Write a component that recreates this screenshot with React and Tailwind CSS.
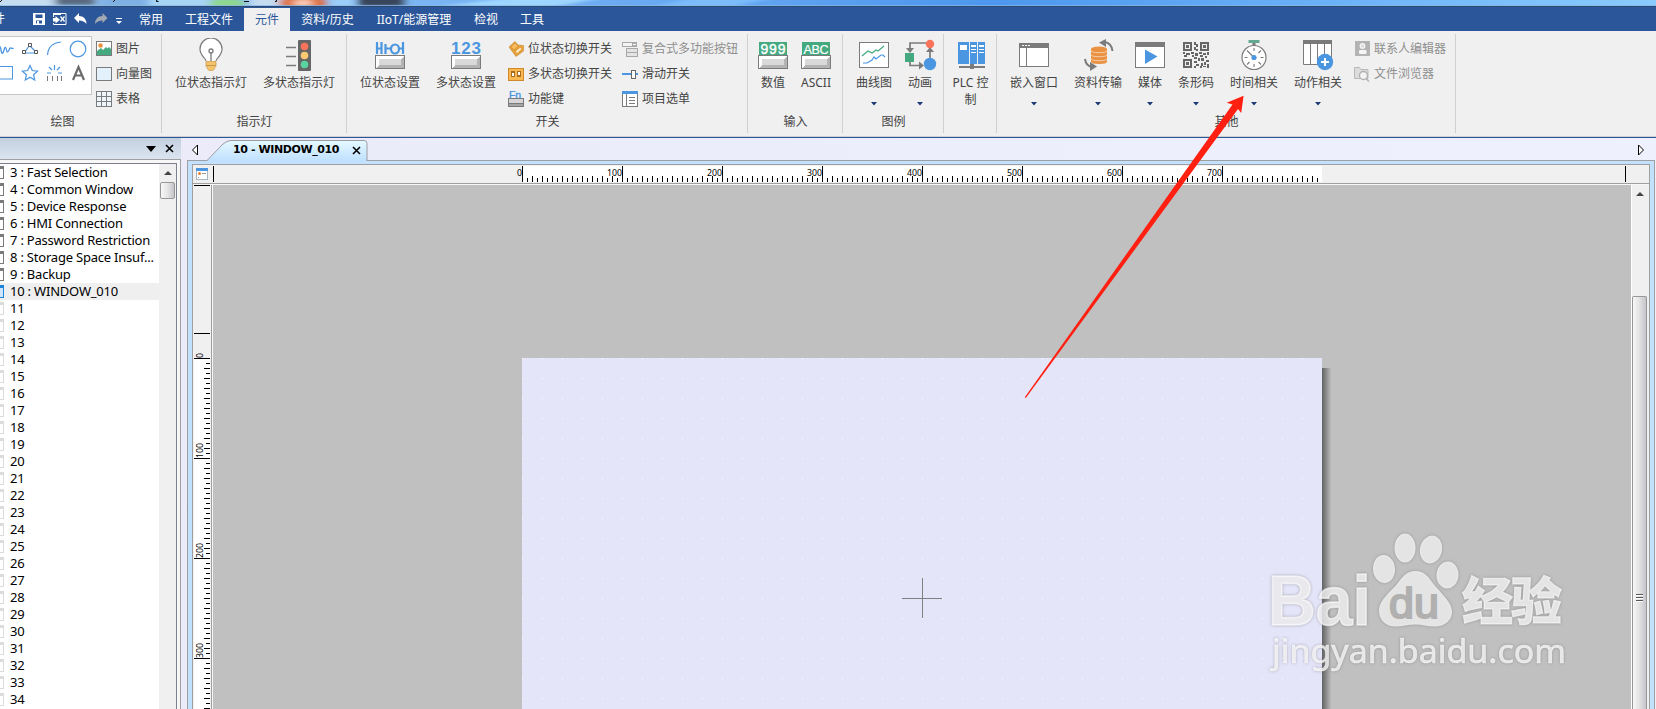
import React from "react";

const GREY = "#7b7b7b";
const BLUE = "#4a96e0";
const GREEN = "#44a97f";

/* ---------- small helpers ---------- */
function Svg({ w, h, children, className = "" }) {
  return (
    <svg width={w} height={h} viewBox={`0 0 ${w} ${h}`} fill="none" className={`block shrink-0 ${className}`}>
      {children}
    </svg>
  );
}

function KeyCap({ y = 17 }) {
  return (
    <g shapeRendering="crispEdges">
      <rect x="2.5" y={y + 0.5} width="29" height="13" fill="#d9d9d9" stroke={GREY} />
      <path d={`M3 ${y + 1}H31L28 ${y + 4}H6V${y + 10}L3 ${y + 13}Z`} fill="#fff" />
      <path d={`M31 ${y + 1}V${y + 13}H3L6 ${y + 10}H28V${y + 4}Z`} fill="#b4b4b4" />
    </g>
  );
}

/* ---------- large ribbon icons, 34 x 34 ---------- */
const big = {
  bulb: (
    <>
      <path d="M12 23c0-3-6-5-6-12a11 11 0 0 1 22 0c0 7-6 9-6 12" fill="#fff" stroke={GREY} strokeWidth="1.2" />
      <circle cx="17" cy="13" r="2" stroke={GREY} strokeWidth="1.3" />
      <path d="M17 15V23" stroke={GREY} strokeWidth="1.3" />
      <path d="M12 23.5h10v4q0 1-1 2l-1 2q-.5 1-1.500 1h-3q-1 0-1.500-1l-1-2q-1-1-1-2z" fill="#f2c36b" stroke="#c9964a" strokeWidth=".7" />
      <path d="M12 27.500h10" stroke="#c9964a" />
    </>
  ),
  traffic: (
    <>
      <rect x="16" y="2" width="13" height="31" rx="1" fill="#666" />
      <circle cx="22.500" cy="8.500" r="3.800" fill="#fb735a" />
      <circle cx="22.500" cy="17.500" r="3.800" fill="#fdc972" />
      <circle cx="22.500" cy="26.500" r="3.800" fill="#5bd3a0" />
      <path d="M4 9.500h10M4 18.500h10M4 27.500h10" stroke={GREY} strokeWidth="1.400" />
    </>
  ),
  bitSet: (
    <>
      <path d="M4 4v12M8.500 4v12M4 10.500h4M12.500 6v10M12 10.500h6M30 4v12M26 10.500h3" stroke={BLUE} strokeWidth="2.200" />
      <ellipse cx="22" cy="11" rx="4" ry="4.500" stroke={BLUE} strokeWidth="2.200" />
      <KeyCap />
    </>
  ),
  wordSet: (
    <>
      <text x="2" y="16" fill={BLUE} fontSize="17" fontWeight="700" fontFamily="Liberation Sans" textLength="30">123</text>
      <KeyCap />
    </>
  ),
  numeric: (
    <>
      <rect x="3" y="4" width="28" height="14" fill={GREEN} />
      <text x="4.500" y="16" fill="#fff" stroke="#fff" strokeWidth=".4" fontSize="14" fontFamily="Liberation Sans" textLength="25">999</text>
      <KeyCap y={17} />
    </>
  ),
  ascii: (
    <>
      <rect x="3" y="4" width="28" height="14" fill={GREEN} />
      <text x="4.500" y="15.500" fill="#fff" stroke="#fff" strokeWidth=".2" fontSize="12.500" fontFamily="Liberation Sans" textLength="25">ABC</text>
      <KeyCap y={17} />
    </>
  ),
  trend: (
    <>
      <rect x="2.500" y="4.500" width="29" height="25" fill="#fff" stroke={GREY} />
      <path d="M5 18l6-5 4 2 4-3 2 1 6-5" stroke={GREEN} strokeWidth="1.200" />
      <path d="M6 25h4l5-3 2-3 2 2 5-4h2l2 2" stroke={BLUE} strokeWidth="1.200" />
    </>
  ),
  anim: (
    <>
      <path d="M23 5H7v7M7 24v3.500h10M27 20v-8" stroke={GREY} strokeWidth="1.700" />
      <path d="M3 10h8l-4 5zM16 23.500l5 4-5 4zM23 14h8l-4-5z" fill={GREY} />
      <rect x="2" y="15" width="9" height="9" fill={GREEN} />
      <circle cx="27" cy="6" r="4.200" fill="#fb735a" />
      <circle cx="27" cy="26" r="6.200" fill={BLUE} />
    </>
  ),
  plc: (
    <g shapeRendering="crispEdges">
      <path d="M4 4h11v22H4zM16 4h7v22h-7zM24 4h7v22h-7z" fill={BLUE} />
      <path d="M6 7h7v5H6zM17 7h5v2h-5zM17 11h5v1h-5zM17 14h5v1h-5zM25 7h5v2h-5zM25 11h5v1h-5zM25 14h5v1h-5z" fill="#fff" />
      <path d="M5 28h26v2H5zM16 26h4v5h-4z" fill={GREY} />
    </g>
  ),
  embed: (
    <g shapeRendering="crispEdges">
      <rect x="2.500" y="5.500" width="29" height="23" fill="#fff" stroke={GREY} />
      <path d="M2 5h30v5H2zM9 10h1v19H9z" fill={GREY} />
      <path d="M5 7h2v1H5zM8 7h2v1H8zM11 7h2v1h-2z" fill="#fff" />
    </g>
  ),
  transfer: (
    <>
      <path d="M10 11v12.500q0 2.500 8 2.500t8-2.500V11z" fill="#ea9142" />
      <ellipse cx="18" cy="11" rx="8" ry="2.400" fill="#ea9142" />
      <path d="M10 12.500q0 2.200 8 2.200t8-2.200M10 16.500q0 2.200 8 2.200t8-2.200M10 20.500q0 2.200 8 2.200t8-2.200" stroke="#f8dcc0" strokeWidth=".8" />
      <path d="M31.500 13q-1-8-8-9" stroke={GREY} strokeWidth="2" />
      <path d="M25 1v8l-7-4.500z" fill={GREY} />
      <path d="M4 21q1 7 7 8" stroke={GREY} strokeWidth="2" />
      <path d="M9 24v9l7-4.500z" fill={GREY} />
    </>
  ),
  media: (
    <>
      <rect x="2.500" y="4.500" width="29" height="25" fill="#fff" stroke={GREY} />
      <path d="M2 4h30v5H2z" fill={GREY} />
      <path d="M12 11.500l12.500 7L12 26z" fill={BLUE} />
    </>
  ),
  qr: (
    <g shapeRendering="crispEdges" fill="#666">
      <path fillRule="evenodd" d="M4 4h9v9H4zM6 6v5h5V6zM21 4h9v9h-9zM23 6v5h5V6zM4 21h9v9H4zM6 23v5h5v-5z" />
      <path d="M7 7h3v3H7zM24 7h3v3h-3zM7 24h3v3H7zM15 4h2v3h-2zM17 6h2v3h-2zM15 9h2v3h-2zM17 11h2v2h-2zM4 14h2v2H4zM7 15h4v2H7zM5 17h3v2H5zM12 14h3v2h-3zM13 17h2v2h-2zM16 15h3v3h-3zM20 14h3v2h-3zM24 15h3v2h-3zM28 14h2v3h-2zM21 17h3v2h-3zM26 18h2v2h-2zM15 19h3v2h-3zM19 20h2v3h-2zM15 23h3v2h-3zM17 26h3v2h-3zM15 28h2v2h-2zM22 20h3v3h-3zM27 22h3v2h-3zM22 25h2v3h-2zM25 24h2v3h-2zM28 26h2v4h-2zM21 28h2v2h-2zM24 28h3v1h-3z" />
    </g>
  ),
  timer: (
    <>
      <path d="M15.500 5h3v3h-3z" fill={GREY} />
      <rect x="11.500" y="2" width="11" height="3" fill="#63a893" />
      <circle cx="17" cy="19.500" r="12" fill="#fff" stroke={GREY} strokeWidth="1.200" />
      <path d="M17 10v3M17 26v3M7.500 19.500h3M23.500 19.500h3M10 12.500l7 7M24 12.500l-2.500 2.500M10 26.500l2.500-2.500M24 26.500l-2.500-2.500" stroke={GREY} strokeWidth="1.100" />
      <circle cx="17" cy="19.500" r="2.600" fill={BLUE} />
    </>
  ),
  action: (
    <>
      <path d="M2.500 3v23.500h28V3" fill="#fff" stroke={GREY} />
      <path d="M9.500 4v22M16.500 4v22M23.500 4v22" stroke={GREY} />
      <path d="M2 2h29v4H2z" fill={GREY} />
      <circle cx="24" cy="24" r="8.200" fill={BLUE} />
      <path d="M24 20v8M20 24h8" stroke="#fff" strokeWidth="2" />
    </>
  ),
};

/* ---------- small ribbon icons, 16 x 16 ---------- */
const small = {
  picture: (
    <>
      <rect x=".5" y=".5" width="15" height="14" fill="#fff" stroke={GREY} />
      <path d="M1 14V10l4-3 2 2 3-3 1.500 1.500L13 6l2 2v6z" fill={GREEN} />
      <circle cx="4.500" cy="4.500" r="2.300" fill="#ea9142" />
    </>
  ),
  vector: <rect x=".5" y="1.500" width="15" height="13" fill="#e3f1fd" stroke={GREY} />,
  table: (
    <g shapeRendering="crispEdges">
      <rect x=".5" y=".5" width="15" height="15" fill="#eef5fb" stroke={GREY} />
      <path d="M1 5.500h14M1 10.500h14M5.500 1v14M10.500 1v14" stroke={GREY} />
    </g>
  ),
  toggleBit: (
    <>
      <path d="M1 6l6-5.500 3 3.500 5.500 0.500V10L8 15.500z" fill="#e5a13c" stroke="#c98a2e" strokeWidth=".6" />
      <path d="M3 5.500L7 2l3 3-4 4z" fill="#f7bd5d" stroke="#c98a2e" strokeWidth=".6" />
      <path d="M8 10.500l4-3.500 1.500 1-4.500 4z" fill="#fff4dd" />
    </>
  ),
  toggleMulti: (
    <g shapeRendering="crispEdges">
      <rect x=".5" y="2.500" width="15" height="12" fill="#fbb84e" stroke="#d08a2c" />
      <path d="M3 5h4v6H3zM9 5h4v6H9z" fill="#a86d20" />
      <path d="M4 7h2v3H4zM10 6h2v3h-2z" fill="#fff" />
    </g>
  ),
  fn: (
    <>
      <text x="1" y="7.500" fontSize="10.500" fill={BLUE} stroke={BLUE} strokeWidth=".4" fontFamily="Liberation Sans" textLength="12">Fn</text>
      <rect x=".5" y="7.500" width="15" height="8" fill="#d6d6d6" stroke={GREY} />
      <path d="M1 13h14v2H1z" fill="#a5a5a5" />
      <path d="M1 12.500h14" stroke={GREY} />
    </>
  ),
  combo: (
    <g shapeRendering="crispEdges">
      <rect x=".5" y="1.500" width="14" height="4" fill="#f4f4f4" stroke="#a8a8a8" />
      <rect x="10" y="1" width="5" height="5" fill="#a8a8a8" />
      <path d="M11 3h3v1h-3z" fill="#fff" />
      <rect x="4.500" y="7.500" width="11" height="4" fill="#e4e4e4" stroke="#a8a8a8" />
      <rect x="4.500" y="11.500" width="11" height="4" fill="#e4e4e4" stroke="#a8a8a8" />
    </g>
  ),
  slider: (
    <g shapeRendering="crispEdges">
      <path d="M0 7h9v2H0zM14 7h2v2h-2z" fill={BLUE} />
      <rect x="9.500" y="4.500" width="4" height="8" fill="#fff" stroke="#666" />
    </g>
  ),
  menu: (
    <g shapeRendering="crispEdges">
      <rect x=".5" y=".5" width="15" height="15" fill="#fff" stroke={GREY} />
      <path d="M0 0h16v3H0z" fill={BLUE} />
      <path d="M4 3h1v12H4zM7 6h6v1H7zM7 9h6v1H7zM7 12h6v1H7z" fill={GREY} />
    </g>
  ),
  contact: (
    <>
      <rect x="1" y="0" width="15" height="15" fill="#b3b3b3" />
      <circle cx="8.500" cy="5" r="2.300" stroke="#f5f5f5" strokeWidth="1.200" fill="#ddd" />
      <rect x="5" y="9" width="7.500" height="4" rx="1" fill="#f5f5f5" />
    </>
  ),
  browse: (
    <>
      <path d="M.5 1.500h5l1.500 2h7v9H.5z" fill="#dcdcdc" stroke="#b9b9b9" />
      <circle cx="9.500" cy="9.500" r="4" fill="#f3f3f3" stroke="#b0b0b0" strokeWidth="1.300" />
      <path d="M12 12.500l3 3" stroke="#b0b0b0" strokeWidth="1.500" />
    </>
  ),
};

function BigButton({ icon, label, width, caret = false }) {
  return (
    <div className={`flex shrink-0 flex-col items-center pt-[7px] ${width}`}>
      <Svg w={34} h={34}>{big[icon]}</Svg>
      <div className="mt-[2px] text-center leading-[17px]">{label}</div>
      {caret && (
        <Svg w={6} h={4} className="mt-[11px]"><path d="M0 0h6L3 3.500z" fill="#1f3a78" /></Svg>
      )}
    </div>
  );
}

function SmallButton({ icon, label, disabled = false }) {
  return (
    <div className={`flex h-[25px] items-center gap-1 ${disabled ? "text-[#8f8f8f]" : ""}`}>
      <Svg w={16} h={16}>{small[icon]}</Svg>
      <span className="leading-4">{label}</span>
    </div>
  );
}

function Group({ label, width, pad, children, labelClass = "" }) {
  return (
    <section className={`relative flex shrink-0 flex-col ${width}`}>
      <div className={`flex h-[83px] ${pad}`}>{children}</div>
      <div className={`text-center leading-4 ${labelClass}`}>{label}</div>
      <div className="absolute right-0 top-[3px] h-[99px] w-px bg-[#d0d0d0]" />
    </section>
  );
}

function Gallery() {
  return (
    <div className="mt-[5px] h-[59px] w-[92px] border-y border-r border-[#c6c6c6] bg-white">
      <Svg w={90} h={57}>
        <path d="M-3 16c2-8 3-8 4-3s2 4 3 0 2-3 2.500 0 2 2 3-1 2 1 4-1" stroke={BLUE} strokeWidth="1.300" />
        <path d="M25 15L29 9M30 9l6 6M26 16h8" stroke={BLUE} strokeWidth="1.200" />
        <path d="M22.500 13.500h3v3h-3zM28.500 6.500h3v3h-3zM34.500 13.500h3v3h-3z" stroke="#555" fill="#fff" />
        <path d="M47.500 18q1-12 13.500-13" stroke={BLUE} strokeWidth="1.200" />
        <circle cx="78" cy="12" r="7.800" stroke={BLUE} strokeWidth="1.200" />
        <rect x="-6" y="29.500" width="18.500" height="12.500" stroke={BLUE} />
        <path d="M30 28.500l2.300 5 5.300.6-4 3.600 1.100 5.300-4.700-2.700-4.700 2.700 1.100-5.300-4-3.600 5.300-.6z" stroke={BLUE} strokeWidth="1.200" />
        <path d="M54.500 28v5M47 36h4M58 36h4M49 30l3 3M60 30l-3 3" stroke={BLUE} strokeWidth="1.200" />
        <path d="M47.500 39v5M52.500 39v5M57.500 39v5M61.500 39v5" stroke="#777" />
        <path d="M73 43L78.500 30L84 43M75 38.500h7" stroke="#6b6b6b" strokeWidth="2.200" />
      </Svg>
    </div>
  );
}

function Ribbon() {
  return (
    <div className="flex h-[106px] border-b border-[#d0d0d0] bg-[#f0f0f0] text-[#444]">
      <Group label="绘图" width="w-[162px]" labelClass="pr-[37px]">
        <Gallery />
        <div className="ml-1 flex flex-col pt-[5px]">
          <SmallButton icon="picture" label="图片" />
          <SmallButton icon="vector" label="向量图" />
          <SmallButton icon="table" label="表格" />
        </div>
      </Group>
      <Group label="指示灯" width="w-[185px]" pad="pl-[5px]">
        <BigButton icon="bulb" label="位状态指示灯" width="w-[88px]" />
        <BigButton icon="traffic" label="多状态指示灯" width="w-[88px]" />
      </Group>
      <Group label="开关" width="w-[401px]" pad="pl-[5px]">
        <BigButton icon="bitSet" label="位状态设置" width="w-[76px]" />
        <BigButton icon="wordSet" label="多状态设置" width="w-[76px]" />
        <div className="ml-1 flex w-[114px] flex-col pt-[5px]">
          <SmallButton icon="toggleBit" label="位状态切换开关" />
          <SmallButton icon="toggleMulti" label="多状态切换开关" />
          <SmallButton icon="fn" label="功能键" />
        </div>
        <div className="flex flex-col pt-[5px]">
          <SmallButton icon="combo" label="复合式多功能按钮" disabled />
          <SmallButton icon="slider" label="滑动开关" />
          <SmallButton icon="menu" label="项目选单" />
        </div>
      </Group>
      <Group label="输入" width="w-[95px]" pad="pl-[3px]">
        <BigButton icon="numeric" label="数值" width="w-[44px]" />
        <BigButton icon="ascii" label="ASCII" width="w-[42px]" />
      </Group>
      <Group label="图例" width="w-[101px]" pad="pl-[8px]">
        <BigButton icon="trend" label="曲线图" width="w-[46px]" caret />
        <BigButton icon="anim" label="动画" width="w-[46px]" caret />
      </Group>
      <Group label="" width="w-[53px]">
        <BigButton icon="plc" label={<>PLC 控<br />制</>} width="w-[53px]" />
      </Group>
      <Group label="其他" width="w-[459px]" pad="pl-[5px]">
        <BigButton icon="embed" label="嵌入窗口" width="w-[64px]" caret />
        <BigButton icon="transfer" label="资料传输" width="w-[64px]" caret />
        <BigButton icon="media" label="媒体" width="w-[40px]" caret />
        <BigButton icon="qr" label="条形码" width="w-[52px]" caret />
        <BigButton icon="timer" label="时间相关" width="w-[64px]" caret />
        <BigButton icon="action" label="动作相关" width="w-[64px]" caret />
        <div className="ml-1 flex flex-col pt-[5px]">
          <SmallButton icon="contact" label="联系人编辑器" disabled />
          <SmallButton icon="browse" label="文件浏览器" disabled />
        </div>
      </Group>
    </div>
  );
}

function TitleStrip() {
  return (
    <div className="h-[7px] overflow-hidden border-b border-[#2e4a70] bg-linear-to-r from-[#9ccaf5] via-[#4d97ee] via-60% to-[#8acbff]">
      <svg width="1656" height="7" viewBox="0 0 1656 7" className="block">
        <defs>
          <filter id="soft" x="-20%" y="-100%" width="140%" height="300%"><feGaussianBlur stdDeviation="4 1.500" /></filter>
        </defs>
        <g filter="url(#soft)">
          <rect x="-10" y="-6" width="66" height="16" fill="#c5dcf1" />
          <rect x="55" y="-6" width="40" height="11" fill="#5a6b80" />
          <rect x="100" y="-6" width="48" height="16" fill="#7fb0e2" />
          <rect x="150" y="-6" width="60" height="16" fill="#a8d4f4" />
          <ellipse cx="227" cy="4" rx="18" ry="6" fill="#90d890" />
          <rect x="250" y="-6" width="30" height="16" fill="#c5dcf1" />
          <ellipse cx="303" cy="3" rx="24" ry="7" fill="#e0703c" />
          <ellipse cx="303" cy="3" rx="10" ry="4" fill="#f7c6b0" />
          <rect x="330" y="-6" width="24" height="16" fill="#9ccff8" />
          <rect x="358" y="-6" width="46" height="12" fill="#39445a" />
          <path d="M430 8L520 -4H610L540 10z" fill="#9ed6ff" />
          <path d="M640 10L700 -4H780L720 10z" fill="#7cbcfb" />
        </g>
        <path d="M0 5.500H1656" stroke="#85b7e8" strokeOpacity=".7" />
        <path d="M0 2l2-2M113 2l2-2M156.500 0v1.500h2M244 1.500h5M275 1.500h1.500v-1.500" stroke="#111" />
      </svg>
    </div>
  );
}

function Tab({ label, width, active = false }) {
  return (
    <div
      className={`mt-px flex h-[23px] items-center justify-center whitespace-nowrap ${width} ${
        active ? "bg-[#f0f0f0] text-[#2b579a]" : "text-white"
      }`}
    >
      {label}
    </div>
  );
}

function MenuBar() {
  return (
    <div className="flex h-6 bg-[#2b579a]">
      <div className="flex w-[128px] items-center overflow-hidden text-white">
        <span className="-ml-[7px] w-[12px]">件</span>
        <Svg w={12} h={12} className="ml-7">
          <path fillRule="evenodd" d="M0 0h12v12H0zM2.500 1.500v3.500h7V1.500zM3 7.500v3h6v-3z" fill="#fff" />
          <path d="M4 8h2v3H4z" fill="#fff" />
        </Svg>
        <Svg w={14} h={12} className="ml-2">
          <path d="M.5 4V.5h12.500v11H.5V10" stroke="#fff" />
          <path d="M0 0h8v2H0z" fill="#fff" />
          <path d="M0 5h2.500V3L7 6.800 2.500 10.500V8.500H0z" fill="#fff" />
          <path d="M7.500 3.500l4 5M11.500 3.500l-4 5" stroke="#fff" strokeWidth="1.300" />
        </Svg>
        <Svg w={13} h={12} className="ml-[7px]">
          <path d="M5 0v3q7 0 7.500 8Q10 7.500 5 7.500V10L0 5z" fill="#fff" />
        </Svg>
        <Svg w={13} h={12} className="ml-2">
          <path d="M7.500 0v3Q.5 3 0 11q2.500-3.500 7.500-3.500V10L12.500 5z" fill="#a2a8b2" />
        </Svg>
        <Svg w={6} h={8} className="ml-2 mt-1">
          <path d="M0 1.500h6" stroke="#fff" /><path d="M0 4h6L3 7z" fill="#fff" />
        </Svg>
      </div>
      <Tab label="常用" width="w-[46px]" />
      <Tab label="工程文件" width="w-[70px]" />
      <Tab label="元件" width="w-[46px]" active />
      <Tab label="资料/历史" width="w-[75px]" />
      <Tab label="IIoT/能源管理" width="w-[98px]" />
      <Tab label="检视" width="w-[46px]" />
      <Tab label="工具" width="w-[46px]" />
    </div>
  );
}

const rows = [
  "3 : Fast Selection", "4 : Common Window", "5 : Device Response", "6 : HMI Connection",
  "7 : Password Restriction", "8 : Storage Space Insuf...", "9 : Backup", "10 : WINDOW_010",
  ...Array.from({ length: 24 }, (_, i) => String(11 + i)),
];

function WindowList() {
  return (
    <aside className="flex w-[181px] shrink-0 flex-col">
      <div className="flex h-[21px] items-center justify-end gap-[9px] bg-linear-to-b from-[#c3d0de] to-[#dbe5f1] pr-[7px]">
        <Svg w={10} h={6}><path d="M0 0h10L5 6z" fill="#000" /></Svg>
        <Svg w={9} h={9}><path d="M1 1l7 7M8 1l-7 7" stroke="#000" strokeWidth="1.600" /></Svg>
      </div>
      <div className="flex min-h-0 flex-1 border-r border-t border-[#a0a0a0] bg-[#f7f7f7] pt-[3px] pr-[3px]">
        <div className="flex min-w-0 flex-1 border-r border-t border-[#7d818c] bg-white">
          <div className="w-[159px] overflow-hidden">
            {rows.map((r, i) => (
              <div
                key={r}
                className={`flex h-[17px] items-center whitespace-nowrap text-[13px] leading-[17px] text-black ${i === 7 ? "bg-[#efefef]" : ""}`}
              >
                <div
                  className={`mr-[6px] h-[13px] w-1 border-y border-r border-t-[3px] ${
                    i === 7 ? "border-[#1d84dc] bg-[#cfe6fa]" : i < 7 ? "border-[#7a7a7a]" : "border-[#dcdcdc]"
                  }`}
                />
                <span className={i < 8 ? "tracking-[-0.21px]" : "tracking-[-0.3px]"}>{r}</span>
              </div>
            ))}
          </div>
          <div className="flex w-[17px] flex-col items-center bg-[#f0f0f0]">
            <Svg w={8} h={4} className="mt-[7px]"><path d="M0 4h8L4 0z" fill="#444" /></Svg>
            <div className="mt-[7px] h-[17px] w-[15px] rounded-[2px] border border-[#979797] bg-linear-to-r from-[#f7f7f7] via-[#e6e6e8] to-[#c4c4ca]" />
          </div>
        </div>
      </div>
    </aside>
  );
}

const hundredsX = [0, 100, 200, 300, 400, 500, 600, 700];
const hundredsY = [0, 100, 200, 300];

function ticks(from, to) {
  const out = [];
  for (let v = from; v < to; v += 5) out.push(v);
  return out;
}

function TopRuler() {
  return (
    <svg width="1438" height="18" viewBox="211 165 1438 18" className="block" shapeRendering="crispEdges">
      <rect x="522" y="166" width="800" height="16" fill="#fff" />
      <path d="M213.500 166V182M1625.500 166V182" stroke="#000" />
      <path
        d={ticks(0, 800).map((v) => `M${522.5 + v} 182V${v % 100 === 0 ? 166 : v % 10 === 0 ? 176 : 178}`).join("")}
        stroke="#000"
      />
      {hundredsX.map((v) => (
        <text key={v} x={522 + v} y="176" textAnchor="end" fontSize="9.500" fontFamily="Noto Sans" fill="#000" textLength={v ? 15 : 5} lengthAdjust="spacingAndGlyphs">{v}</text>
      ))}
    </svg>
  );
}

function SideRuler() {
  return (
    <svg width="18" height="524" viewBox="193 185 18 524" className="block" shapeRendering="crispEdges">
      <rect x="194" y="358" width="16" height="360" fill="#fff" />
      <path d="M194 185.500H210M194 333.500H210" stroke="#000" />
      <path
        d={ticks(0, 351).map((v) => `M210 ${358.5 + v}H${v % 100 === 0 ? 194 : v % 10 === 0 ? 204 : 206}`).join("")}
        stroke="#000"
      />
      {hundredsY.map((v) => (
        <text key={v} transform={`translate(203 ${358 + v}) rotate(-90)`} fontSize="9.500" fontFamily="Noto Sans" fill="#000" textLength={v ? 15 : 5} lengthAdjust="spacingAndGlyphs">{v}</text>
      ))}
    </svg>
  );
}

function Watermark() {
  return (
    <svg width="310" height="150" viewBox="1262 525 310 150" className="absolute left-[1262px] top-[525px]">
      <g fill="#fff" fillOpacity=".74" style={{ filter: "drop-shadow(0 0 1.5px rgba(90,90,90,.55))" }}>
        <text x="1268" y="624.500" fontSize="70" fontWeight="700" fontFamily="Liberation Sans" stroke="#fff" strokeOpacity=".6" strokeWidth="1.500" textLength="103" lengthAdjust="spacingAndGlyphs">Bai</text>
        <ellipse cx="1384" cy="569" rx="11" ry="14" transform="rotate(-5 1384 569)" />
        <ellipse cx="1405" cy="548" rx="10.500" ry="14.500" />
        <ellipse cx="1431" cy="549.500" rx="11" ry="14" transform="rotate(12 1431 549.5)" />
        <ellipse cx="1447.500" cy="575" rx="11" ry="13.500" transform="rotate(5 1447.5 575)" />
        <path d="M1415.500 571c9 0 13 6 18 13s18 17 18.500 27c.3 9-7 15-16 15.500-8 .3-13-2-20.500-2s-13 2-21 2c-10-.5-16-8-15.500-17 .8-10 12-18 18.500-26 5-6.500 9-12.500 18-12.500z" />
        <text x="1462" y="619.500" fontSize="51" fontWeight="900" fontFamily="Noto Sans CJK SC" stroke="#fff" strokeOpacity=".6" strokeWidth="1" textLength="100">经验</text>
        <text x="1272" y="663" fontSize="33.500" fontFamily="Noto Sans" stroke="#fff" strokeOpacity=".6" strokeWidth=".7" textLength="294" lengthAdjust="spacingAndGlyphs">jingyan.baidu.com</text>
      </g>
      <text x="1389" y="617.500" fontSize="43" fontFamily="Liberation Sans" fill="#b0b0b0" stroke="#b0b0b0" strokeWidth="2" textLength="50" lengthAdjust="spacingAndGlyphs">du</text>
    </svg>
  );
}

function Canvas() {
  return (
    <div className="relative min-w-0 flex-1 overflow-hidden bg-[#c0c0c0] pl-[309px] pt-[173px]">
      <div className="flex">
        <div className="relative h-[351px] w-[800px] shrink-0 bg-[#e5e5fa]">
          <svg width="800" height="351" className="block" shapeRendering="crispEdges">
            <defs>
              <pattern id="dots" width="20" height="20" patternUnits="userSpaceOnUse">
                <rect width="1" height="1" fill="#fffff4" />
              </pattern>
            </defs>
            <rect width="800" height="351" fill="url(#dots)" />
            <path d="M380 240.500H420M400.500 220V260" stroke="#808080" />
          </svg>
        </div>
        <div className="mt-[10px] h-[341px] w-[9px] bg-linear-to-r from-[#636363] to-[#bcbcbc]" />
      </div>
    </div>
  );
}

function Editor() {
  return (
    <main className="flex min-w-0 flex-1 flex-col bg-linear-to-r from-[#ebebfa] to-[#eef1fd]">
      <div className="flex h-[22px] shrink-0">
        <Svg w={26} h={22}><path d="M16.500 7v10l-5-5z" stroke="#000" fill="#fff" /></Svg>
        <div className="relative h-[23px] w-[161px]">
          <svg width="161" height="23" className="absolute left-0 top-0">
            <defs>
              <linearGradient id="tab" x1="0" y1="0" x2="0" y2="1">
                <stop offset="0" stopColor="#e6f9ff" /><stop offset="1" stopColor="#bfe0ff" />
              </linearGradient>
            </defs>
            <path d="M0 23L16 6q4-3.500 8-3.500H157q3 0 3 3V23z" fill="url(#tab)" />
            <path d="M0 22.500L16 6q4-3.500 8-3.500H157q3 0 3 3V23" fill="none" stroke="#9b9ba3" />
          </svg>
          <div className="relative flex h-full items-center pl-[26px] pt-px">
            <span className="w-[119px] whitespace-nowrap font-['DejaVu_Sans'] text-[11px] font-bold leading-4 tracking-[-0.4px] text-black">10 - WINDOW_010</span>
            <Svg w={9} h={9}><path d="M1 1l7 7M8 1l-7 7" stroke="#000" strokeWidth="1.600" /></Svg>
          </div>
        </div>
        <div className="flex flex-1 justify-end pr-3">
          <Svg w={6} h={22}><path d="M.5 7v10l5-5z" stroke="#000" fill="#fff" /></Svg>
        </div>
      </div>
      <div className="ml-[6px] mr-px flex min-h-0 flex-1 flex-col border-x border-t border-[#9f9f9f] bg-[#c1e1ff] px-1 pt-[3px]">
        <div className="flex min-h-0 flex-1 flex-col border-x border-t border-[#9f9f9f] bg-[#f0f0f0]">
          <div className="flex h-[19px] shrink-0 border-b border-[#9f9f9f]">
            <div className="w-[18px] pl-[3px] pt-[3px]">
              <Svg w={12} h={12}>
                <rect x=".5" y=".5" width="11" height="11" fill="#fff" stroke="#a9b6c3" />
                <path d="M0 0h12v3H0z" fill={BLUE} />
                <circle cx="3.500" cy="5.500" r="1.500" fill="#ea7a32" />
                <path d="M6 5h4v1H6zM2 9h1v1H2z" fill="#999" />
              </Svg>
            </div>
            <TopRuler />
          </div>
          <div className="h-px shrink-0 bg-[#f7f7f7]" />
          <div className="flex min-h-0 flex-1">
            <SideRuler />
            <div className="w-px bg-[#9f9f9f]" />
            <div className="w-px bg-[#f7f7f7]" />
            <Canvas />
            <div className="flex w-[18px] shrink-0 flex-col items-center border-l border-[#fff] bg-[#f0f0f0] pr-[2px]">
              <Svg w={8} h={4} className="mt-[7px]"><path d="M0 4h8L4 0z" fill="#444" /></Svg>
              <div className="mt-[100px] flex w-[15px] flex-1 justify-center rounded-t-[2px] border-x border-t border-[#979797] bg-linear-to-r from-[#f7f7f7] via-[#e2e2e4] to-[#c4c4ca]">
                <Svg w={7} h={9} className="mt-[297px]"><path d="M0 .5h7M0 3.500h7M0 6.500h7" stroke="#555" /><path d="M0 1.500h7M0 4.500h7M0 7.500h7" stroke="#fff" /></Svg>
              </div>
            </div>
          </div>
        </div>
      </div>
    </main>
  );
}

export default function App() {
  return (
    <div className="relative flex h-[709px] w-[1656px] flex-col overflow-hidden bg-[#f0f0f0] font-['Noto_Sans','Noto_Sans_CJK_SC',sans-serif] text-[12px]">
      <TitleStrip />
      <MenuBar />
      <Ribbon />
      <div className="flex min-h-0 flex-1 border-t border-[#2b579a]">
        <WindowList />
        <Editor />
      </div>
      <Watermark />
      <svg width="230" height="310" viewBox="1020 92 230 310" className="absolute left-[1020px] top-[92px]">
        <path d="M1243.600 95.700L1226.700 102.700L1232.500 104.500L1024.800 397.300L1025.800 398L1238 109L1241.200 113z" fill="#ff2012" />
      </svg>
    </div>
  );
}
